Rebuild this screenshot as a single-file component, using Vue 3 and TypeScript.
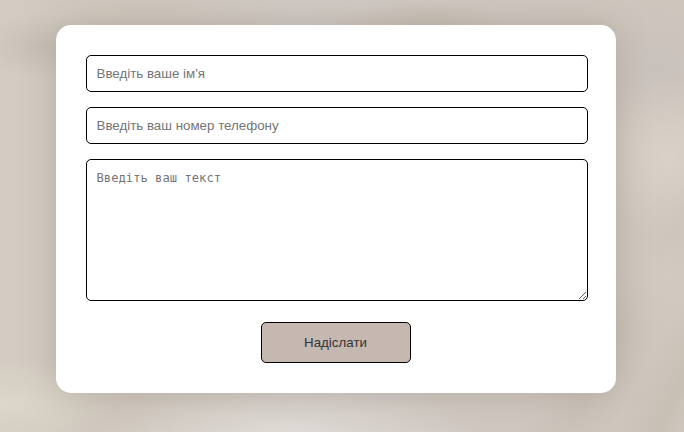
<script setup lang="ts">
import { ref } from 'vue'

const name = ref('')
const phone = ref('')
const message = ref('')
</script>

<template>
  <main class="page">
    <form class="card" @submit.prevent>
      <input v-model="name" class="field" type="text" placeholder="Введіть ваше ім'я" />
      <input v-model="phone" class="field" type="tel" placeholder="Введіть ваш номер телефону" />
      <textarea v-model="message" class="field message" placeholder="Введіть ваш текст"></textarea>
      <button class="submit" type="submit">Надіслати</button>
    </form>
  </main>
</template>

<style>
body {
  margin: 0;
}
</style>

<style scoped>
.page {
  box-sizing: border-box;
  height: 432px;
  padding: 25px 68px 39px 56px;
  overflow: hidden;
  font-family: "Liberation Sans", Arial, sans-serif;
  background:
    radial-gradient(ellipse 60px 34px at 42px 46px, rgba(180, 172, 160, 0.4), transparent),
    radial-gradient(ellipse 110px 44px at 8px 404px, rgba(220, 216, 202, 0.9), transparent),
    radial-gradient(ellipse 190px 50px at 285px 432px, rgba(224, 220, 215, 0.9), transparent),
    radial-gradient(ellipse 90px 26px at 425px 26px, rgba(190, 177, 160, 0.45), transparent),
    radial-gradient(ellipse 70px 80px at 668px 158px, rgba(219, 211, 201, 0.9), transparent),
    radial-gradient(ellipse 100px 70px at 660px 65px, rgba(199, 191, 187, 0.8), transparent),
    radial-gradient(ellipse 60px 70px at 665px 275px, rgba(212, 203, 194, 0.8), transparent),
    linear-gradient(118deg, transparent 82%, rgba(194, 184, 173, 0.35) 87%, rgba(206, 198, 186, 0.2) 92%, rgba(190, 180, 168, 0.4) 97%, transparent),
    linear-gradient(90deg, #d4ccc2 0%, #cec6bc 20%, #d0c9c4 43%, #cec6bf 75%, #cfc7bd 100%);
}

.card {
  box-sizing: border-box;
  display: flex;
  flex-direction: column;
  align-items: flex-start;
  gap: 15px;
  width: 560px;
  height: 368px;
  padding: 30px;
  border-radius: 15px;
  background: #fff;
  box-shadow: 0 0 32px rgba(110, 100, 86, 0.28);
}

.field {
  box-sizing: border-box;
  flex: none;
  width: 502px;
  height: 37px;
  margin: 0;
  padding: 10px 10px 10px 9.5px;
  border: 1px solid #000;
  border-radius: 5px;
  outline: none;
  background: #fff;
  color: #222;
  font: 13.333px "Liberation Sans", Arial, sans-serif;
}

.field::placeholder {
  color: #757575;
  opacity: 1;
}

.message {
  height: 142px;
  font: 12.18px/16px "DejaVu Sans Mono", monospace;
  resize: both;
}

.submit {
  box-sizing: border-box;
  align-self: center;
  flex: none;
  width: 150px;
  height: 41px;
  margin: 6px 0 0;
  padding: 0 1px 0 0;
  border: 1px solid #000;
  border-radius: 5px;
  background: #c4b8b1;
  color: #333;
  font: 13.333px "Liberation Sans", Arial, sans-serif;
}
</style>
